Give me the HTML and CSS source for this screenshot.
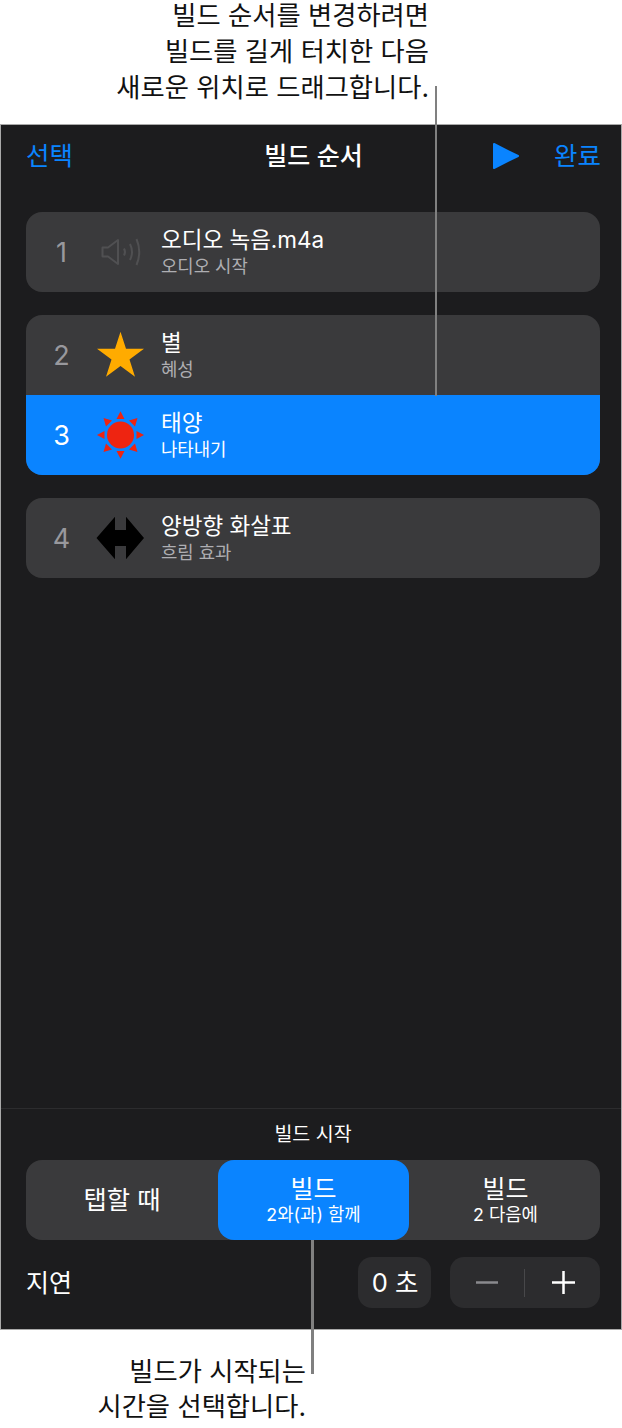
FILE: index.html
```html
<!DOCTYPE html>
<html lang="ko">
<head>
<meta charset="utf-8">
<title>빌드 순서</title>
<link rel="stylesheet" href="styles.css">
</head>
<body>
<div class="page">
  <p class="note note-top">빌드 순서를 변경하려면<br>빌드를 길게 터치한 다음<br>새로운 위치로 드래그합니다.</p>
  <main class="panel">
    <header class="nav">
      <span class="link">선택</span>
      <h1 class="title">빌드 순서</h1>
      <div class="nav-right">
        <svg class="play" width="28" height="30" viewBox="0 0 28 30"><path d="M2 3 L26 15 L2 27 Z" fill="#0a84ff" stroke="#0a84ff" stroke-width="2" stroke-linejoin="round"/></svg>
        <span class="link">완료</span>
      </div>
    </header>
    <section class="lists">
      <div class="group">
        <div class="row">
          <span class="num">1</span>
          <svg class="icon" width="48" height="48" viewBox="0 0 48 48" fill="none" stroke="#505052" stroke-width="2"><path d="M6.500 19.500 H12 L22 12 V36 L12 28.500 H6.500 Z" stroke-linejoin="round"/><path d="M28 20.500 Q30 24 28 27.500"/><path d="M34 16 Q38 24 34 32"/><path d="M40.500 11 Q46 24 40.500 37"/></svg>
          <div class="txt"><div class="name">오디오 녹음.m4a</div><div class="sub">오디오 시작</div></div>
        </div>
      </div>
      <div class="group">
        <div class="row">
          <span class="num">2</span>
          <svg class="icon" width="48" height="48" viewBox="0 0 48 48"><path d="M24.500 0.700 L30 17.800 L48 17.800 L33.500 28.500 L39 45.700 L24.500 35 L10 45.700 L15.500 28.500 L1 17.800 L19 17.800 Z" fill="#ffab00"/></svg>
          <div class="txt"><div class="name">별</div><div class="sub">혜성</div></div>
        </div>
        <div class="row row-on">
          <span class="num">3</span>
          <svg class="icon" width="48" height="48" viewBox="0 0 48 48" fill="#ee2411"><circle cx="24.500" cy="24" r="13.500"/><path d="M24.500 0.300 L28.500 8 H20.500 Z"/><path d="M24.500 47.700 L28.500 40 H20.500 Z"/><path d="M1 24 L8.500 20 V28 Z"/><path d="M48 24 L40.500 20 V28 Z"/><path d="M7.500 7 L16 9.500 L10 15.500 Z"/><path d="M41.500 7 L33 9.500 L39 15.500 Z"/><path d="M7.500 41 L16 38.500 L10 32.500 Z"/><path d="M41.500 41 L33 38.500 L39 32.500 Z"/></svg>
          <div class="txt"><div class="name">태양</div><div class="sub">나타내기</div></div>
        </div>
      </div>
      <div class="group">
        <div class="row">
          <span class="num">4</span>
          <svg class="icon" width="48" height="48" viewBox="0 0 48 48"><path d="M0.500 24 L19 2.700 V16 H30 V2.700 L48 24 L30 45.300 V32 H19 V45.300 Z" fill="#000"/></svg>
          <div class="txt"><div class="name">양방향 화살표</div><div class="sub">흐림 효과</div></div>
        </div>
      </div>
    </section>
    <footer class="bottom">
      <div class="bottom-label">빌드 시작</div>
      <div class="segments">
        <div class="seg"><span class="seg-big">탭할 때</span></div>
        <div class="seg seg-on"><span class="seg-main">빌드</span><span class="seg-sub">2와(과) 함께</span></div>
        <div class="seg seg-last"><span class="seg-main">빌드</span><span class="seg-sub">2 다음에</span></div>
      </div>
      <div class="delay">
        <span class="delay-label">지연</span>
        <span class="delay-value">0 초</span>
        <div class="stepper">
          <svg class="step" width="75" height="51" viewBox="0 0 75 51"><path d="M26 25.500 H48" stroke="#8a8a8e" stroke-width="2.500"/></svg>
          <span class="step-sep"></span>
          <svg class="step" width="75" height="51" viewBox="0 0 75 51"><path d="M27 25.500 H50 M38.500 14 V37" stroke="#fff" stroke-width="2.500"/></svg>
        </div>
      </div>
    </footer>
  </main>
  <p class="note note-bottom">빌드가 시작되는<br>시간을 선택합니다.</p>
  <span class="leader leader-top"></span>
  <span class="leader leader-bottom"></span>
</div>
</body>
</html>
```
FILE: styles.css
```css
* { box-sizing: border-box; }
html, body { margin: 0; padding: 0; background: #fff; }
body { font-family: Inter, "Noto Sans CJK KR", sans-serif; }
.page { position: relative; width: 622px; height: 1428px; overflow: hidden; }
.note { margin: 0; font-size: 26.300px; color: #111; text-align: right; }
.note-top { height: 126px; margin-top: -2px; line-height: 36px; padding-right: 193px; }
.note-bottom { padding: 24px 316px 0 0; line-height: 35px; }
.panel {
  height: 1206px;
  display: flex;
  flex-direction: column;
  background: #1c1c1e;
  border: 1px solid #a9a9a9;
}
.nav { display: grid; grid-template-columns: 1fr auto 1fr; align-items: center; height: 62px; padding: 0 20px 0 25px; }
.link { font-size: 25.500px; line-height: 36px; color: #0a84ff; }
.title { margin: 0; font-size: 25px; line-height: 36px; font-weight: 500; color: #fff; text-align: center; }
.nav-right { display: flex; align-items: center; justify-content: flex-end; gap: 34px; }
.play { display: block; }
.lists { flex: 1; display: flex; flex-direction: column; gap: 23px; padding: 25px 21px 0 25px; }
.group { border-radius: 16px; overflow: hidden; background: #3a3a3c; }
.row { display: flex; align-items: center; height: 80px; }
.row-on { background: #0a84ff; }
.num { width: 71px; text-align: center; font-size: 27px; color: #98989d; }
.row-on .num { color: #fff; }
.icon { display: block; margin-left: -1px; flex: none; }
.txt { margin-left: 17px; padding-bottom: 2px; display: flex; flex-direction: column; }
.name { font-size: 22.500px; line-height: 31px; color: #fff; }
.sub { font-size: 17.800px; line-height: 24px; color: #aeaeb2; }
.row-on .sub { color: #fff; }
.bottom { height: 221px; border-top: 1px solid #2c2c2e; padding: 0 21px 0 25px; display: flex; flex-direction: column; }
.bottom-label { height: 51px; padding-top: 11px; font-size: 19.500px; line-height: 28px; color: #fff; text-align: center; }
.segments { display: grid; grid-template-columns: 192px 191px 191px; height: 80px; background: #3a3a3c; border-radius: 16px; }
.seg { display: flex; flex-direction: column; align-items: center; justify-content: center; color: #fff; }
.seg-on { background: #0a84ff; border-radius: 16px; }
.seg-last { padding-left: 2px; }
.seg-big { font-size: 25.300px; line-height: 34px; }
.seg-main { font-size: 25px; line-height: 30px; }
.seg-sub { font-size: 17.800px; line-height: 22px; }
.delay { display: flex; align-items: center; margin-top: 17px; height: 51px; }
.delay-label { flex: 1; font-size: 25px; line-height: 34px; color: #fff; }
.delay-value { width: 73px; height: 51px; padding-left: 1px; line-height: 51px; border-radius: 14px; background: #2c2c2e; color: #fff; font-size: 25.500px; text-align: center; }
.stepper { display: flex; align-items: center; width: 150px; height: 51px; margin-left: 19px; border-radius: 14px; background: #2c2c2e; }
.step { display: block; flex: none; }
.step-sep { width: 1px; height: 28px; background: #48484a; flex: none; margin-left: -1px; }
.leader { position: absolute; width: 2px; background: #808080; }
.leader-top { left: 435px; top: 86px; height: 310px; }
.leader-bottom { left: 311px; top: 1240px; height: 134px; width: 3px; }
```
